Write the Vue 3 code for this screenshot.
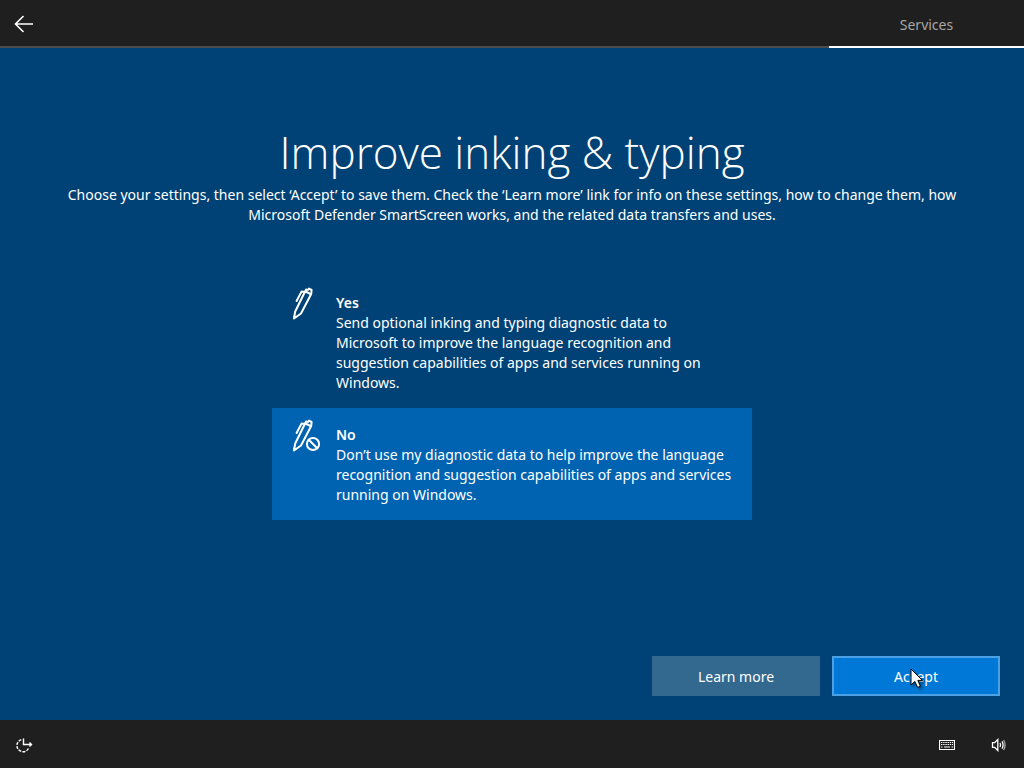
<script setup>
import { ref } from 'vue'

const choice = ref('no')
const options = [
  {
    value: 'yes',
    title: 'Yes',
    lines: [
      'Send optional inking and typing diagnostic data to',
      'Microsoft to improve the language recognition and',
      'suggestion capabilities of apps and services running on',
      'Windows.',
    ],
  },
  {
    value: 'no',
    title: 'No',
    lines: [
      'Don’t use my diagnostic data to help improve the language',
      'recognition and suggestion capabilities of apps and services',
      'running on Windows.',
    ],
  },
]
</script>

<template>
  <div class="setup">
    <header class="topbar">
      <button class="icon-btn" type="button" aria-label="Back">
        <svg width="20" height="18" viewBox="0 0 20 18" fill="none" stroke="#fff" stroke-width="1.6">
          <path d="M19 9H1.8M9.5 1L1.5 9l8 8" />
        </svg>
      </button>
      <div class="step">Services</div>
    </header>

    <main class="content">
      <h1>Improve inking &amp; typing</h1>
      <p class="intro">
        Choose your settings, then select ‘Accept’ to save them. Check the ‘Learn more’ link for info on these settings, how to change them, how<br />
        Microsoft Defender SmartScreen works, and the related data transfers and uses.
      </p>

      <div class="options" role="radiogroup" aria-label="Improve inking and typing">
        <label
          v-for="option in options"
          :key="option.value"
          class="option"
          :class="{ selected: choice === option.value }"
        >
          <input v-model="choice" class="radio" type="radio" name="inking" :value="option.value" />
          <svg class="pen" width="32" height="36" viewBox="0 0 32 36" fill="none" stroke="#fff" stroke-width="2" stroke-linejoin="round" stroke-linecap="round">
            <path d="M6 32.5L7.2 25.5L17.2 5.2L18 3.6L20 4L21 2.6L23.6 4L23.2 8L13 27.5Z" />
            <path d="M17.5 5.5L22.5 8" />
            <path d="M17 6L13.5 5.6L8.6 15" />
            <path d="M6.4 29.8L8.4 31L6 32.5Z" fill="#fff" stroke-width="1" />
            <g v-if="option.value === 'no'">
              <circle class="knockout" cx="25" cy="26" r="8.5" stroke="none" />
              <circle cx="25" cy="26" r="6.1" />
              <path d="M20.8 21.8L29.2 30.2" />
            </g>
          </svg>
          <span class="option-text">
            <strong>{{ option.title }}</strong>
            <span v-for="line in option.lines" :key="line" class="line">{{ line }}</span>
          </span>
        </label>
      </div>

      <div class="actions">
        <button class="btn" type="button">Learn more</button>
        <button class="btn primary" type="button">
          Accept
          <svg class="pointer" width="16" height="22" viewBox="0 0 16 22">
            <path d="M1 1V17L4.8 13.4L7.6 19.4L10.4 18.2L7.8 12.4H12.4Z" fill="#fff" stroke="#000" stroke-width="1" />
          </svg>
        </button>
      </div>
    </main>

    <footer class="bottombar">
      <button class="icon-btn" type="button" aria-label="Ease of access">
        <svg width="18" height="18" viewBox="0 0 18 18" fill="none" stroke="#fff" stroke-width="1.4">
          <path d="M8.5 2.5V8.5H16.5M14.5 6.5L16.5 8.5L14.5 10.5" />
          <path d="M6.3 3.6A6.2 6.2 0 1 0 13.6 12.4" stroke-dasharray="3 1.2" />
        </svg>
      </button>
      <span class="spacer"></span>
      <button class="icon-btn keyboard" type="button" aria-label="Keyboard">
        <svg width="16" height="10" viewBox="0 0 16 10" fill="none" stroke="#fff" stroke-width="1.2">
          <path d="M0.5 0.5H15.5V9.5H0.5Z" />
          <path d="M2 2.5H14M2 4.5H14" stroke-dasharray="1.4 0.8" />
          <path d="M2 7H3.5M5 7H11M12.5 7H14" />
        </svg>
      </button>
      <button class="icon-btn sound" type="button" aria-label="Volume">
        <svg width="16" height="14" viewBox="0 0 16 14" fill="none" stroke="#fff" stroke-width="1.3">
          <path d="M1.5 4.7H3.7L6.8 1.5V12.5L3.7 9.3H1.5Z" />
          <path d="M9 5Q10.2 7 9 9M11 3.4Q13.2 7 11 10.6" />
          <path d="M12.6 2Q15.6 7 12.6 12" stroke="#aaa" />
        </svg>
      </button>
    </footer>
  </div>
</template>

<style>
body {
  background: #004275;
}
</style>

<style scoped>
.setup {
  display: flex;
  flex-direction: column;
  min-height: 100vh;
  background: #004275;
  color: #fff;
  font-family: "Segoe UI", "Noto Sans", "Open Sans", sans-serif;
  font-size: 14px;
  line-height: 20px;
}
.setup * {
  box-sizing: border-box;
}
button {
  border: 0;
  padding: 0;
  background: none;
  color: inherit;
  font: inherit;
}
.topbar {
  display: flex;
  justify-content: space-between;
  height: 48px;
  background: linear-gradient(#4d4d4d, #4d4d4d) bottom / 100% 2px no-repeat #1f1f1f;
}
.icon-btn {
  display: flex;
  align-items: center;
  justify-content: center;
  width: 48px;
  height: 48px;
}
.step {
  width: 195px;
  padding-top: 2px;
  border-bottom: 2px solid #fff;
  color: #a6a6a6;
  line-height: 46px;
  text-align: center;
}
.content {
  display: flex;
  flex: 1;
  flex-direction: column;
  padding: 76px 24px 24px;
}
h1 {
  margin: 0;
  padding-bottom: 5px;
  font-family: "Segoe UI", "Open Sans", sans-serif;
  font-size: 44px;
  font-weight: 300;
  line-height: 56px;
  text-align: center;
}
.intro {
  margin: 0;
  text-align: center;
  white-space: nowrap;
}
.options {
  width: 480px;
  margin: 51px auto 0;
}
.option {
  position: relative;
  display: flex;
  gap: 16px;
  padding: 17px 16px 15px;
}
.option.selected {
  background: #0063b1;
}
.radio {
  position: absolute;
  inset: 0;
  width: 100%;
  height: 100%;
  margin: 0;
  opacity: 0;
}
.pen {
  flex: none;
  margin-top: -7px;
}
.knockout {
  fill: #0063b1;
}
.option-text {
  white-space: nowrap;
}
.option-text strong {
  display: block;
  font-weight: 600;
}
.line {
  display: block;
}
.actions {
  display: flex;
  justify-content: flex-end;
  gap: 12px;
  margin-top: auto;
}
.btn {
  position: relative;
  width: 168px;
  height: 40px;
  padding-top: 2px;
  background: #33688f;
}
.primary {
  border: 2px solid #4ca1e4;
  background: #0078d7;
}
.pointer {
  position: absolute;
  top: 10px;
  left: 76px;
  filter: drop-shadow(2px 2px 1px rgba(0, 0, 0, 0.4));
}
.bottombar {
  display: flex;
  height: 48px;
  padding-top: 1px;
  background: #1f1f1f;
}
.spacer {
  flex: 1;
}
.keyboard {
  width: 54px;
}
.sound {
  width: 50px;
}
</style>
